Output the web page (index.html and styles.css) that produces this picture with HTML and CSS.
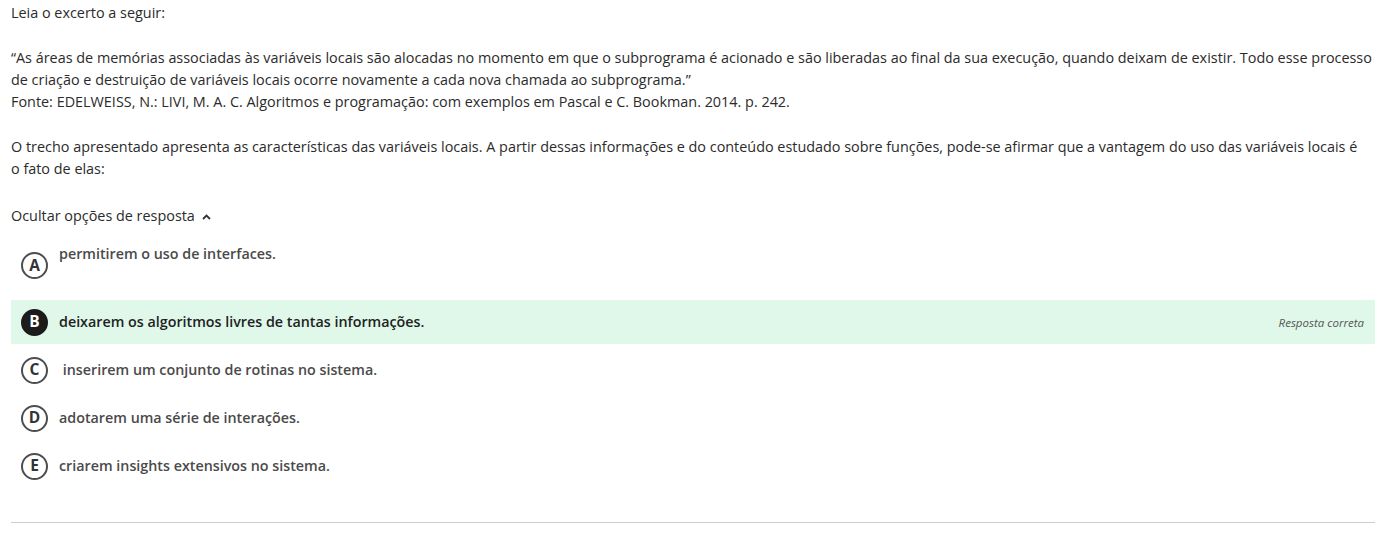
FILE: index.html
```html
<!DOCTYPE html>
<html lang="pt-BR">
<head>
<meta charset="utf-8">
<title>Questão</title>
<link rel="stylesheet" href="styles.css">
</head>
<body>
<div class="question">
  <p class="intro">Leia o excerto a seguir:</p>
  <p class="quote">“As áreas de memórias associadas às variáveis locais são alocadas no momento em que o subprograma é acionado e são liberadas ao final da sua execução, quando deixam de existir. Todo esse processo de criação e destruição de variáveis locais ocorre novamente a cada nova chamada ao subprograma.”<br>Fonte: EDELWEISS, N.: LIVI, M. A. C. Algoritmos e programação: com exemplos em Pascal e C. Bookman. 2014. p. 242.</p>
  <p class="stem">O trecho apresentado apresenta as características das variáveis locais. A partir dessas informações e do conteúdo estudado sobre funções, pode-se afirmar que a vantagem do uso das variáveis locais é o fato de elas:</p>
  <div class="toggle">Ocultar opções de resposta <svg class="caret" width="9" height="6" viewBox="0 0 9 6"><path d="M1 5 L4.5 1.5 L8 5" fill="none" stroke="#333" stroke-width="1.8"/></svg></div>
  <ul class="options">
    <li class="option option-top"><span class="letter">A</span><span class="text">permitirem o uso de interfaces.</span></li>
    <li class="option correct"><span class="letter">B</span><span class="text">deixarem os algoritmos livres de tantas informações.</span><span class="tag">Resposta correta</span></li>
    <li class="option"><span class="letter">C</span><span class="text">&nbsp;inserirem um conjunto de rotinas no sistema.</span></li>
    <li class="option"><span class="letter">D</span><span class="text">adotarem uma série de interações.</span></li>
    <li class="option"><span class="letter">E</span><span class="text">criarem insights extensivos no sistema.</span></li>
  </ul>
  <hr class="divider">
</div>
</body>
</html>
```
FILE: styles.css
```css
html, body {
  margin: 0;
  padding: 0;
  background: #fff;
}
body {
  font-family: "Open Sans", "Noto Sans", sans-serif;
  font-size: 14.4px;
  color: #2b2b2b;
}
.question {
  padding: 2px 11px 0 11px;
  width: 1364px;
}
.question p {
  margin: 0;
  line-height: 22px;
}
.intro { margin-bottom: 23px !important; }
.quote { margin-bottom: 23px !important; }
.stem {
  margin-bottom: 25px !important;
  max-width: 1352px;
}
.toggle {
  line-height: 22px;
  display: flex;
  align-items: center;
  gap: 7px;
}
.caret { margin-top: 1px; }
.options {
  list-style: none;
  margin: 15px 0 0 0;
  padding: 0;
}
.option {
  display: flex;
  align-items: center;
  min-height: 44px;
  padding: 0 11px 0 10px;
  margin-bottom: 4px;
  box-sizing: border-box;
}
.option-top {
  align-items: flex-start;
  min-height: 54px;
}
.option-top .letter { margin-top: 10px; }
.option-top .text { margin-top: 1px; }
.letter {
  flex: none;
  width: 27px;
  height: 27px;
  box-sizing: border-box;
  border: 2px solid #4d4d4d;
  border-radius: 50%;
  display: flex;
  align-items: center;
  justify-content: center;
  font-weight: 700;
  font-size: 15.5px;
  line-height: 1;
  color: #333;
  margin-right: 11px;
}
.text {
  font-size: 14.3px;
  font-weight: 600;
  line-height: 22px;
  color: #4a4a4a;
}
.correct {
  background: #e0f8ea;
}
.correct .letter {
  background: #1c1c1c;
  border-color: #1c1c1c;
  color: #fff;
}
.correct .text { color: #222; }
.tag {
  margin-left: auto;
  font-style: italic;
  font-size: 11.5px;
  color: #555;
}
.divider {
  border: 0;
  border-top: 1px solid #ccc;
  margin: 34px 0 0 0;
}
```
